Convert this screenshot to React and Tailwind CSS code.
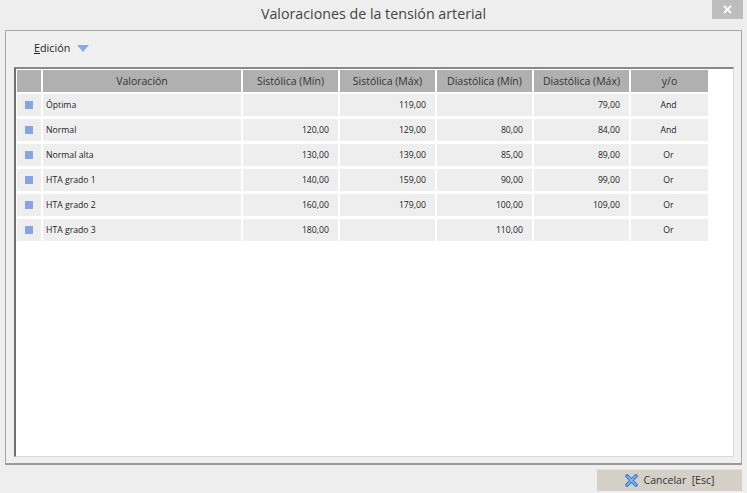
const columns = ["Valoración", "Sistólica (Mín)", "Sistólica (Máx)", "Diastólica (Mín)", "Diastólica (Máx)", "y/o"];

const rows = [
  ["Óptima", "", "119,00", "", "79,00", "And"],
  ["Normal", "120,00", "129,00", "80,00", "84,00", "And"],
  ["Normal alta", "130,00", "139,00", "85,00", "89,00", "Or"],
  ["HTA grado 1", "140,00", "159,00", "90,00", "99,00", "Or"],
  ["HTA grado 2", "160,00", "179,00", "100,00", "109,00", "Or"],
  ["HTA grado 3", "180,00", "", "110,00", "", "Or"],
];

function CancelIcon() {
  return (
    <svg width="13" height="13" viewBox="0 0 13 13" className="mr-[6px]">
      <path d="M2 2 L11 11 M11 2 L2 11" stroke="#2f78c8" strokeWidth="3.6" strokeLinecap="round" />
      <path d="M2 2 L11 11 M11 2 L2 11" stroke="#8fc0ee" strokeWidth="1.4" strokeLinecap="round" />
    </svg>
  );
}

function App() {
  return (
    <div className="w-[747px] h-[493px] overflow-hidden flex flex-col bg-[#eeeeee] text-[#222222] font-['Open_Sans','Liberation_Sans',sans-serif]">
      {/* Title bar */}
      <div className="h-[30px] shrink-0 flex items-start relative">
        <div className="flex-1 text-center text-[14.25px] leading-[28px] text-[#444444]">Valoraciones de la tensión arterial</div>
        <button className="absolute right-[4px] top-0 w-[31px] h-[19px] bg-[#bdbdbd] flex items-center justify-center">
          <svg width="9" height="9" viewBox="0 0 9 9">
            <path d="M1 1 L8 8 M8 1 L1 8" stroke="#ffffff" strokeWidth="1.8" />
          </svg>
        </button>
      </div>

      {/* Panel */}
      <div className="mx-[5px] w-[737px] h-[435px] shrink-0 border border-[#a8a8a8] border-b-2 border-b-[#9a9a9a] bg-[#f0f0f0] flex flex-col">
        <div className="h-[36px] shrink-0 flex items-center pl-[28px] pb-[1px]">
          <span className="text-[10.8px] leading-none"><span className="underline">E</span>dición</span>
          <svg width="12" height="7" viewBox="0 0 12 7" className="ml-[7px]">
            <path d="M0 0 H12 L6 7 Z" fill="#8aa9e0" />
          </svg>
        </div>
        <div className="ml-[8px] mr-[7px] h-[390px] border-t-2 border-l-2 border-t-[#8a8a8a] border-l-[#6f6f6f] bg-white pt-[1px] pl-[1px] border-r border-b border-r-[#d8d8d8] border-b-[#d8d8d8]">
          <div className="grid grid-cols-[24px_198px_95px_95px_95px_95px_77px] gap-x-[2px] w-fit">
            <div className="h-[22px] bg-[#b0b0b0]" />
            {columns.map((c) => (
              <div key={c} className="h-[22px] bg-[#b0b0b0] text-[10.5px] leading-[22px] text-center text-[#333333]">{c}</div>
            ))}
            <div className="col-span-7 h-[2px]" />
            {rows.map((row, i) => (
              <div key={row[0]} className="contents">
                <div className="h-[22px] bg-[#eeeeee] flex items-center justify-center pr-[1px]">
                  <div className="w-[8px] h-[8px] bg-[#86a5df]" />
                </div>
                {row.map((cell, j) => (
                  <div
                    key={j}
                    className={`h-[22px] bg-[#eeeeee] text-[8.7px] leading-[23px] ${
                      j === 0 ? "pl-[3px]" : j === 5 ? "text-center pr-[2px]" : "text-right pr-[9px]"
                    }`}
                  >
                    {cell}
                  </div>
                ))}
                {i < rows.length - 1 && <div className="col-span-7 h-[3px]" />}
              </div>
            ))}
          </div>
        </div>
      </div>

      {/* Footer */}
      <div className="flex-1 flex justify-end items-start pt-[4px] pr-[5px]">
        <button className="w-[145px] h-[22px] bg-[#d4d0c8] border-t border-[#e4e2dc] flex items-center justify-center text-[10.5px] text-[#333333]">
          <CancelIcon />
          <span>Cancelar&nbsp; [Esc]</span>
        </button>
      </div>
    </div>
  );
}

export default App;
